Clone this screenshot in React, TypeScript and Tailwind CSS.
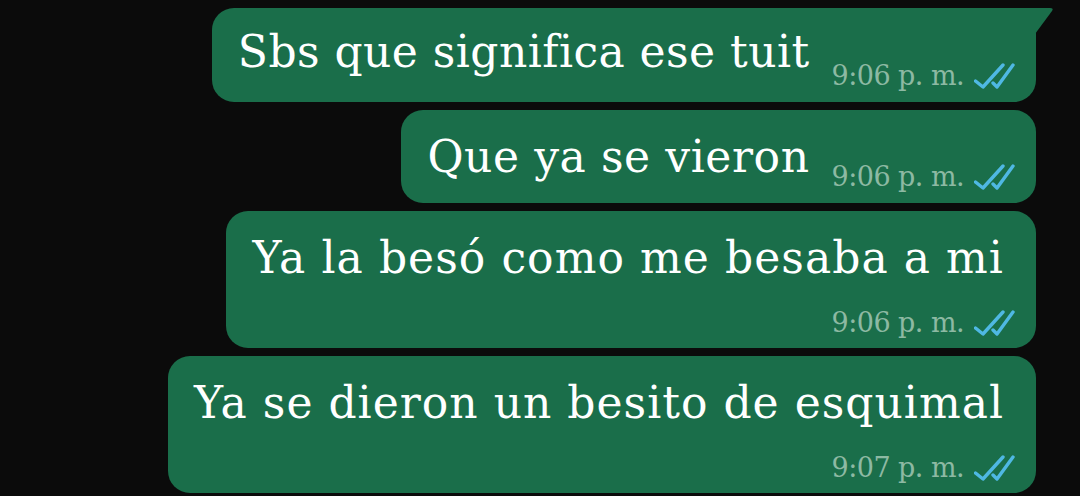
import React from 'react';

type Msg = {
  text: string;
  time: string;
  stacked: boolean;
  h: string;
  track: string;
  mb?: string;
  tail?: boolean;
};

const messages: Msg[] = [
  { text: 'Sbs que significa ese tuit', time: '9:06 p. m.', stacked: false, h: 'h-[94px]', track: 'tracking-[0.01em]', mb: 'mb-[10px]', tail: true },
  { text: 'Que ya se vieron', time: '9:06 p. m.', stacked: false, h: 'h-[93px]', track: 'tracking-[0.013em]', mb: 'mb-[6px]' },
  { text: 'Ya la besó como me besaba a mi', time: '9:06 p. m.', stacked: true, h: 'h-[137px]', track: 'tracking-[0.024em]' },
  { text: 'Ya se dieron un besito de esquimal', time: '9:07 p. m.', stacked: true, h: 'h-[137px]', track: 'tracking-[0.023em]' },
];

const Ticks = () => (
  <svg width="42" height="26" viewBox="0 0 42 26" fill="none" className="shrink-0">
    <path d="M1.5 18 L9 24 L29 2" stroke="#4fb8e3" strokeWidth="3.4" strokeLinecap="round" strokeLinejoin="round" />
    <path d="M19 20 L23 24 L39 2" stroke="#4fb8e3" strokeWidth="3.4" strokeLinecap="round" strokeLinejoin="round" />
  </svg>
);

const Meta = ({ time }: { time: string }) => (
  <div className="flex items-center gap-[10px] h-[28px] shrink-0">
    <span className="text-[27px] leading-[28px] text-[#8db9a3] whitespace-nowrap tracking-[-0.02em]">{time}</span>
    <Ticks />
  </div>
);

// WhatsApp-style outgoing bubble; the first one carries the little corner tail
const Bubble = ({ msg }: { msg: Msg }) => {
  const corner = msg.tail ? 'rounded-tr-none' : '';
  if (msg.stacked) {
    return (
      <div className={`relative flex flex-col justify-between items-end rounded-[22px] bg-[#1a6e4a] pl-[26px] pr-[20px] pt-[19px] pb-[11px] ${msg.h} ${corner}`}>
        <span className={`self-start pr-[12px] text-[44px] leading-[56px] text-white whitespace-nowrap ${msg.track}`}>
          {msg.text}
        </span>
        <Meta time={msg.time} />
      </div>
    );
  }
  return (
    <div className={`relative flex items-end rounded-[22px] bg-[#1a6e4a] pl-[26px] pr-[20px] pb-[12px] ${msg.h} ${corner}`}>
      <span className={`${msg.mb} text-[44px] leading-[56px] text-white whitespace-nowrap ${msg.track}`}>
        {msg.text}
      </span>
      <div className="ml-[22px]">
        <Meta time={msg.time} />
      </div>
      {msg.tail && (
        <svg className="absolute top-0 right-[-18px]" width="19" height="26" viewBox="0 0 19 26">
          <path d="M0 0 L15 0 Q19 0 17 3 L0 26 Z" fill="#1a6e4a" />
        </svg>
      )}
    </div>
  );
};

export default function App() {
  return (
    <div
      className="w-full h-[496px] overflow-hidden bg-[#0b0b0b] flex flex-col items-end gap-[8px] pt-[8px] pr-[44px]"
      style={{ fontFamily: '"DejaVu Serif", "Liberation Serif", serif' }}
    >
      {messages.map((m) => (
        <Bubble key={m.text} msg={m} />
      ))}
    </div>
  );
}
